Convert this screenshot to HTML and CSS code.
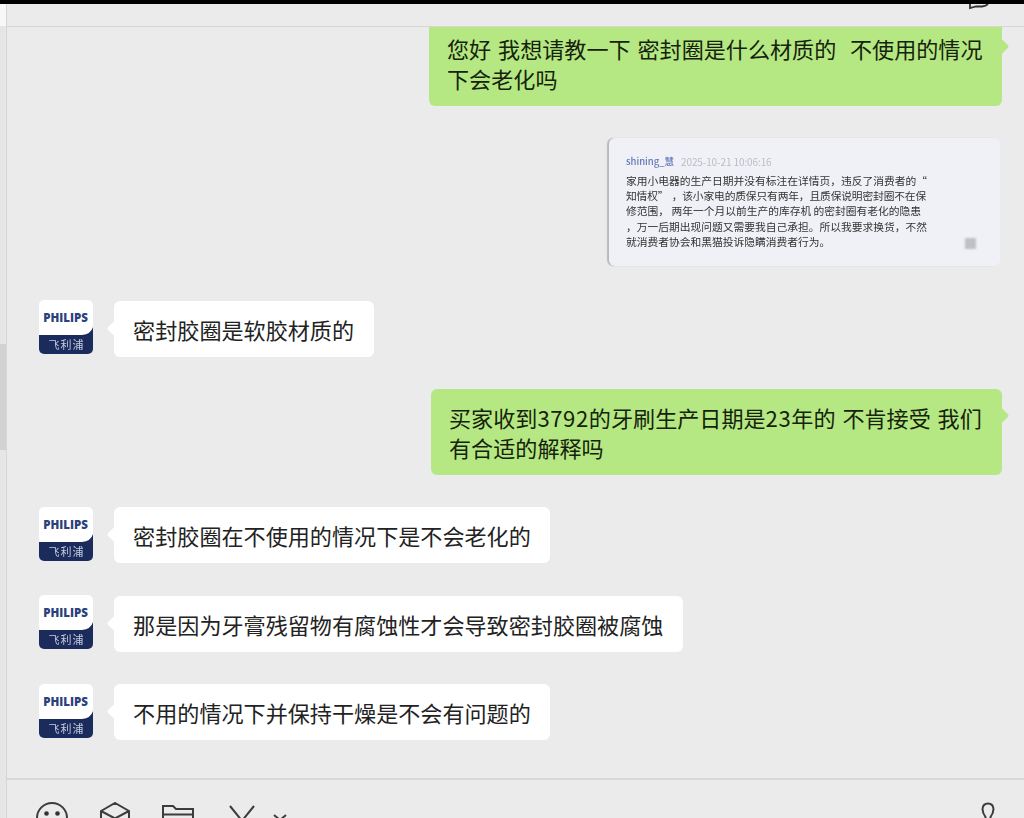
FILE: index.html
```
<!DOCTYPE html>
<html lang="zh-CN">
<head>
    <meta charset="UTF-8">
    <title>聊天</title>
    <link rel="stylesheet" href="styles.css">
</head>
<body>
    <div class="sidebar">
        <div class="scroll-thumb"></div>
    </div>
    <div class="chat">
        <header class="chat-header">
            <svg class="header-icon" width="24" height="6" viewBox="0 0 24 6"><path d="M2 0 V4 L8 2.5 H14 Q18 2 20 0" fill="none" stroke="#333" stroke-width="1.8"/></svg>
        </header>

        <main class="messages">
            <div class="row mine first">
                <div class="bubble">您好 我想请教一下 密封圈是什么材质的&nbsp; 不使用的情况<br>下会老化吗</div>
            </div>

            <div class="row mine card-row">
                <div class="card">
                    <div class="card-head"><span class="name">shining_慧</span><span class="time">2025-10-21 10:06:16</span></div>
                    <p>家用小电器的生产日期并没有标注在详情页，违反了消费者的“</p>
                    <p class="tight">知情权” ，该小家电的质保只有两年，且质保说明密封圈不在保</p>
                    <p>修范围， 两年一个月以前生产的库存机 的密封圈有老化的隐患</p>
                    <p>，万一后期出现问题又需要我自己承担。所以我要求换货，不然</p>
                    <p>就消费者协会和黑猫投诉隐瞒消费者行为。</p>
                    <i class="card-mark"></i>
                </div>
            </div>

            <div class="row theirs">
                <div class="avatar"><b>PHILIPS</b><svg class="shield" width="54" height="27" viewBox="0 0 54 27"><path d="M0 8 H43 Q52 7 54 0 V27 H0 Z" fill="#1a2b5c"/></svg><span>飞利浦</span></div>
                <div class="bubble">密封胶圈是软胶材质的</div>
            </div>

            <div class="row mine">
                <div class="bubble">买家收到<span class="num">3792</span>的牙刷生产日期是<span class="num">23</span>年的 不肯接受 我们<br>有合适的解释吗</div>
            </div>

            <div class="row theirs">
                <div class="avatar"><b>PHILIPS</b><svg class="shield" width="54" height="27" viewBox="0 0 54 27"><path d="M0 8 H43 Q52 7 54 0 V27 H0 Z" fill="#1a2b5c"/></svg><span>飞利浦</span></div>
                <div class="bubble">密封胶圈在不使用的情况下是不会老化的</div>
            </div>

            <div class="row theirs">
                <div class="avatar"><b>PHILIPS</b><svg class="shield" width="54" height="27" viewBox="0 0 54 27"><path d="M0 8 H43 Q52 7 54 0 V27 H0 Z" fill="#1a2b5c"/></svg><span>飞利浦</span></div>
                <div class="bubble">那是因为牙膏残留物有腐蚀性才会导致密封胶圈被腐蚀</div>
            </div>

            <div class="row theirs">
                <div class="avatar"><b>PHILIPS</b><svg class="shield" width="54" height="27" viewBox="0 0 54 27"><path d="M0 8 H43 Q52 7 54 0 V27 H0 Z" fill="#1a2b5c"/></svg><span>飞利浦</span></div>
                <div class="bubble">不用的情况下并保持干燥是不会有问题的</div>
            </div>
        </main>

        <footer class="toolbar">
            <svg class="emoji" width="32" height="32" viewBox="0 0 32 32"><circle cx="16" cy="16" r="15"/><circle class="eye" cx="10.5" cy="11.5" r="2.3"/><circle class="eye" cx="21.5" cy="11.5" r="2.3"/><path d="M8 19 Q16 28 24 19"/></svg>
            <svg class="box" width="30" height="32" viewBox="0 0 30 32"><path d="M1 9 L15 1 L29 9 V24 L15 31 L1 24 Z M1 9 L15 16.5 L29 9 M15 16.5 V31"/></svg>
            <svg class="folder" width="34" height="28" viewBox="0 0 34 28"><path d="M2 26 V1 H12 L15 4 H32 V26 Z M2 9.5 H32"/></svg>
            <svg class="scissors" width="28" height="30" viewBox="0 0 28 30"><path d="M2 1 L19 22 M26 1 L9 22"/><circle cx="6" cy="25" r="4"/><circle cx="22" cy="25" r="4"/></svg>
            <svg class="arrow" width="14" height="10" viewBox="0 0 14 10"><path d="M1 1 L7 6 L13 1"/></svg>
            <svg class="mic" width="16" height="30" viewBox="0 0 16 30"><path d="M5.5 18 V15 Q2.5 11 2.5 7 Q3 1.5 8 1.5 Q13 1.5 13.5 7 Q13.5 11 10.5 15 V18"/></svg>
        </footer>
    </div>
</body>
</html>
```
FILE: styles.css
```
* {
    box-sizing: border-box;
}

body {
    margin: 0;
    height: 818px;
    border-top: 4px solid #000;
    background: #ebebeb;
    color: #222;
    font-family: "Noto Sans CJK SC", sans-serif;
    display: flex;
    overflow: hidden;
}

.sidebar {
    width: 7px;
    background: linear-gradient(#f8f8f8 22px, #e6e6e6 22px);
    border-right: 1px solid #d6d6d6;
    padding-top: 340px;
}

.scroll-thumb {
    height: 106px;
    background: #d2d2d2;
}

.chat {
    flex: 1;
    display: flex;
    flex-direction: column;
}

.chat-header {
    height: 23px;
    flex: none;
    border-bottom: 1px solid #d6d6d6;
    display: flex;
    justify-content: flex-end;
    padding-right: 32px;
}

.messages {
    height: 751px;
    flex: none;
    overflow: hidden;
}

.row {
    display: flex;
    align-items: flex-start;
    margin-bottom: 32px;
}

.mine {
    justify-content: flex-end;
    padding-right: 22px;
}

.theirs {
    padding-left: 31.5px;
    gap: 21px;
    height: 56.5px;
}

.bubble {
    position: relative;
    padding: 13px 19.6px;
    border-radius: 6px;
    background: #fff;
    font-size: 22.1px;
    line-height: 30px;
    white-space: nowrap;
}

.theirs .bubble {
    margin-top: 0.6px;
}

.bubble::before {
    content: "";
    position: absolute;
    left: -5px;
    top: 22px;
    width: 11px;
    height: 11px;
    border-radius: 2px;
    background: inherit;
    transform: rotate(45deg);
}

.mine .bubble {
    width: 571px;
    height: 86px;
    padding: 13px 18px;
    background: #b5e883;
    color: #16230c;
    word-spacing: 1.9px;
}

.mine .bubble::before {
    left: auto;
    right: -5px;
    top: 21px;
}

.num {
    letter-spacing: 0.6px;
}

.first {
    margin-top: -7px;
}

.first .bubble {
    width: 573px;
}

.card-row {
    padding-right: 24px;
    margin-bottom: 34px;
}

.card {
    position: relative;
    width: 391px;
    height: 128px;
    padding: 16px 17px;
    border-radius: 6px;
    background: #f0f1f7;
    box-shadow: -2px 0 1px #b9bac0;
    color: #333;
    font-size: 10.75px;
}

.card-head,
.card p {
    height: 15.2px;
    line-height: 15px;
    margin: 0;
    white-space: pre;
    filter: blur(0.7px);
}

.card .tight {
    letter-spacing: -0.15px;
    word-spacing: 1px;
}

.card-head {
    height: 19px;
    display: flex;
    gap: 9px;
}

.name {
    width: 46px;
    color: #6478b8;
    font-size: 9.5px;
    font-weight: 500;
}

.time {
    color: #bcbdc4;
    font-size: 10px;
    letter-spacing: -0.1px;
}

.card-mark {
    position: absolute;
    right: 24px;
    bottom: 17px;
    width: 11px;
    height: 11px;
    background: #bfc0c5;
    filter: blur(1px);
}

.avatar {
    position: relative;
    width: 54px;
    height: 54px;
    border-radius: 5px;
    background: #fff;
    overflow: hidden;
    text-align: center;
}

.avatar b {
    display: block;
    margin-top: 10px;
    color: #2b417c;
    font: 800 11.5px/16px "Open Sans", sans-serif;
}

.shield {
    position: absolute;
    left: 0;
    bottom: 0;
}

.avatar span {
    position: absolute;
    left: 0;
    bottom: 2px;
    width: 54px;
    padding-left: 2px;
    color: #c5cbe0;
    font-size: 11px;
    line-height: 16px;
    letter-spacing: 1px;
    filter: blur(0.4px);
}

.toolbar {
    flex: 1;
    border-top: 2px solid #d8d8d8;
    display: flex;
    align-items: flex-start;
    overflow: hidden;
    padding: 22px 28px 0 29px;
}

.toolbar svg {
    flex: none;
    fill: none;
    stroke: #3c3c3c;
    stroke-width: 2;
}

.toolbar .eye {
    fill: #333;
    stroke: none;
}

.box {
    margin-left: 32px;
}

.folder {
    margin: 3px 0 0 31px;
}

.scissors {
    margin: 3px 0 0 33px;
}

.arrow {
    margin: 12px 0 0 17px;
}

.mic {
    margin-left: auto;
}
```
